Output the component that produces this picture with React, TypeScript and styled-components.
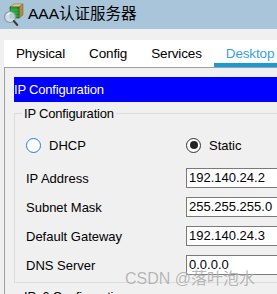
import React from 'react';
import styled, { createGlobalStyle } from 'styled-components';

const GlobalStyle = createGlobalStyle`
  html, body {
    margin: 0;
    padding: 0;
    background: #f0f0f0;
  }
  body {
    font-family: 'Liberation Sans', Arial, 'Noto Sans CJK SC', sans-serif;
    color: #000;
  }
`;

const Window = styled.div`
  position: relative;
  width: 277px;
  height: 294px;
  overflow: hidden;
  background: #f0f0f0;
`;

const TitleBar = styled.div`
  height: 29px;
  display: flex;
  align-items: center;
  gap: 3px;
  padding-left: 1px;
  background: #a8c5da;
`;

const Title = styled.span`
  font-family: 'Liberation Sans', Arial, 'Noto Sans CJK SC', sans-serif;
  font-size: 15.5px;
  line-height: 18px;
  margin-top: -2px;
`;

const Body = styled.div`
  padding: 11px 0 0 4px;
`;

const TabStrip = styled.div`
  display: flex;
  height: 27px;
  background: #fff;
`;

const Tab = styled.div<{ $active?: boolean }>`
  display: flex;
  align-items: center;
  padding: 0 12px;
  margin-top: -1px;
  font-size: 13.5px;
  letter-spacing: -0.15px;
  color: ${p => (p.$active ? '#3a9fdd' : '#000')};
  box-shadow: ${p => (p.$active ? 'inset 0 -4px 0 #1a9ad6' : 'none')};
`;

const Panel = styled.div`
  border-top: 1px solid #a0a0a0;
  border-left: 1px solid #a0a0a0;
  padding: 9px 0 0 9px;
  height: 260px;
`;

const SectionHeader = styled.div`
  height: 25px;
  display: flex;
  align-items: center;
  background: #0000ff;
  color: #fff;
  font-size: 13px;
  letter-spacing: -0.2px;
  width: 300px;
`;

const GroupBox = styled.fieldset<{ $gap?: number }>`
  margin: ${p => p.$gap ?? 4}px 0 0 0;
  padding: 14px 0 7px 11px;
  width: 300px;
  box-sizing: border-box;
  border: 1px solid #dcdcdc;
  min-width: 0;
`;

const Legend = styled.legend`
  margin-left: -4px;
  padding: 0 2px;
  font-size: 13px;
  line-height: 15px;
  letter-spacing: -0.2px;
`;

const Rows = styled.div`
  display: flex;
  flex-direction: column;
  gap: 9px;
`;

const RadioRow = styled.div`
  display: grid;
  grid-template-columns: 160px 1fr;
  height: 20px;
  margin-bottom: 4px;
`;

const RadioLabel = styled.label`
  display: flex;
  align-items: center;
  font-size: 13px;
  gap: 8px;
`;

const RadioDot = styled.span<{ $checked?: boolean }>`
  width: 13px;
  height: 13px;
  border-radius: 50%;
  background: #fff;
  border: ${p => (p.$checked ? '1.5px solid #333' : '1.5px solid #1a7fdc')};
  display: flex;
  align-items: center;
  justify-content: center;
  box-sizing: content-box;

  &::after {
    content: '';
    display: ${p => (p.$checked ? 'block' : 'none')};
    width: 8px;
    height: 8px;
    border-radius: 50%;
    background: #222;
  }
`;

const FieldRow = styled.div`
  display: grid;
  grid-template-columns: 160px 1fr;
  align-items: center;
  height: 20px;
`;

const FieldLabel = styled.span`
  font-size: 13px;
`;

const Input = styled.div`
  height: 20px;
  box-sizing: border-box;
  border: 1px solid #7a7a7a;
  background: #fff;
  padding-left: 2px;
  font-size: 13px;
  line-height: 18px;
  width: 120px;
`;

const Watermark = styled.div`
  position: absolute;
  left: 125px;
  top: 265px;
  font-family: 'Liberation Sans', Arial, 'Noto Sans CJK SC', sans-serif;
  font-size: 16px;
  color: rgba(120, 120, 120, 0.55);
  text-shadow: 0 0 1px rgba(255, 255, 255, 0.8);
  white-space: nowrap;
  pointer-events: none;
`;

function ServerIcon() {
  return (
    <svg width="24" height="24" viewBox="0 0 24 24">
      <polygon points="9,4 13,1 22,1 18,4" fill="#e8c98a" stroke="#8a6a30" strokeWidth="0.6" />
      <polygon points="18,4 22,1 22,12 18,15" fill="#b08a45" stroke="#8a6a30" strokeWidth="0.6" />
      <rect x="9" y="4" width="9" height="11" fill="#1c8c2e" stroke="#0d5a1a" strokeWidth="0.6" />
      <path d="M11 4v11M13 4v11M15 4v11M9 7h9M9 10h9M9 13h9" stroke="#5cc86a" strokeWidth="0.5" />
      <circle cx="9" cy="14" r="5.5" fill="rgba(220,230,240,0.75)" stroke="#8c96a0" strokeWidth="1.2" />
      <path d="M6.5 12a3 3 0 0 1 3-2" stroke="#fff" strokeWidth="1" fill="none" />
      <path d="M12.8 18l3.5 4" stroke="#3a3a3a" strokeWidth="2" strokeLinecap="round" />
    </svg>
  );
}

const fields = [
  { label: 'IP Address', value: '192.140.24.2' },
  { label: 'Subnet Mask', value: '255.255.255.0' },
  { label: 'Default Gateway', value: '192.140.24.3' },
  { label: 'DNS Server', value: '0.0.0.0' },
];

export default function App() {
  return (
    <Window>
      <GlobalStyle />
      <TitleBar>
        <ServerIcon />
        <Title>AAA认证服务器</Title>
      </TitleBar>
      <Body>
        <TabStrip>
          <Tab>Physical</Tab>
          <Tab>Config</Tab>
          <Tab>Services</Tab>
          <Tab $active>Desktop</Tab>
        </TabStrip>
        <Panel>
          <SectionHeader>IP Configuration</SectionHeader>
          <GroupBox>
            <Legend>IP Configuration</Legend>
            <Rows>
              <RadioRow>
                <RadioLabel>
                  <RadioDot />
                  DHCP
                </RadioLabel>
                <RadioLabel>
                  <RadioDot $checked />
                  Static
                </RadioLabel>
              </RadioRow>
              {fields.map(f => (
                <FieldRow key={f.label}>
                  <FieldLabel>{f.label}</FieldLabel>
                  <Input>{f.value}</Input>
                </FieldRow>
              ))}
            </Rows>
          </GroupBox>
          <GroupBox $gap={6}>
            <Legend>IPv6 Configuration</Legend>
          </GroupBox>
        </Panel>
      </Body>
      <Watermark>CSDN @落叶泡水</Watermark>
    </Window>
  );
}
